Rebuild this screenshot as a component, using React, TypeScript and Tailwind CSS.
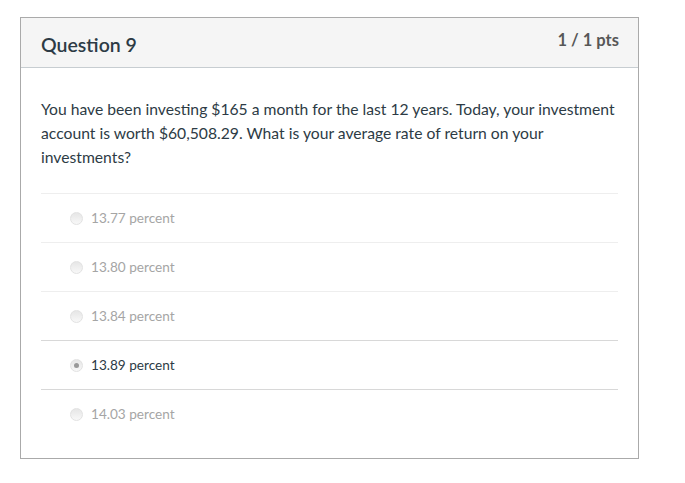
const ANSWERS = [
  { label: "13.77 percent", selected: false },
  { label: "13.80 percent", selected: false },
  { label: "13.84 percent", selected: false },
  { label: "13.89 percent", selected: true },
  { label: "14.03 percent", selected: false },
];

function Radio({ checked }: { checked: boolean }) {
  return (
    <span className="w-[13px] h-[13px] rounded-full border border-[#e2e2e2] bg-gradient-to-b from-[#e6e6e6] to-[#f8f8f8] flex items-center justify-center">
      {checked && <span className="w-[5px] h-[5px] rounded-full bg-[#999999]" />}
    </span>
  );
}

export default function App() {
  return (
    <div className="w-[685px] h-[483px] bg-white pt-[17px] pl-[20px] font-['Lato','Liberation_Sans',sans-serif]">
      <div className="w-[619px] h-[442px] border border-[#aaaaaa] bg-white">
        <div className="h-[50px] bg-[#f5f5f5] border-b border-[#c7cdd1] flex justify-between pl-[20px] pr-[19px]">
          <h2 className="text-[19.5px] font-semibold text-[#2d3b45] pt-[12px]">Question 9</h2>
          <span className="text-[16.5px] font-bold text-[#575757] pt-[10px]">1 / 1 pts</span>
        </div>
        <div className="px-[20px] pt-[29px]">
          <p className="text-[15.7px] leading-[24px] text-[#2d3b45] whitespace-nowrap">
            You have been investing $165 a month for the last 12 years. Today, your investment
            <br />
            account is worth $60,508.29. What is your average rate of return on your
            <br />
            investments?
          </p>
          <div className="mt-[24px]">
            {ANSWERS.map((a, i) => (
              <div
                key={a.label}
                className={
                  "h-[49px] flex items-center gap-[8px] pl-[29px] pt-[1px] border-t " +
                  (a.selected || ANSWERS[i - 1]?.selected ? "border-[#d8d8d8]" : "border-[#eeeeee]")
                }
              >
                <Radio checked={a.selected} />
                <span className={"text-[13.6px] " + (a.selected ? "text-[#2d3b45]" : "text-[#a5a5a5]")}>
                  {a.label}
                </span>
              </div>
            ))}
          </div>
        </div>
      </div>
    </div>
  );
}
